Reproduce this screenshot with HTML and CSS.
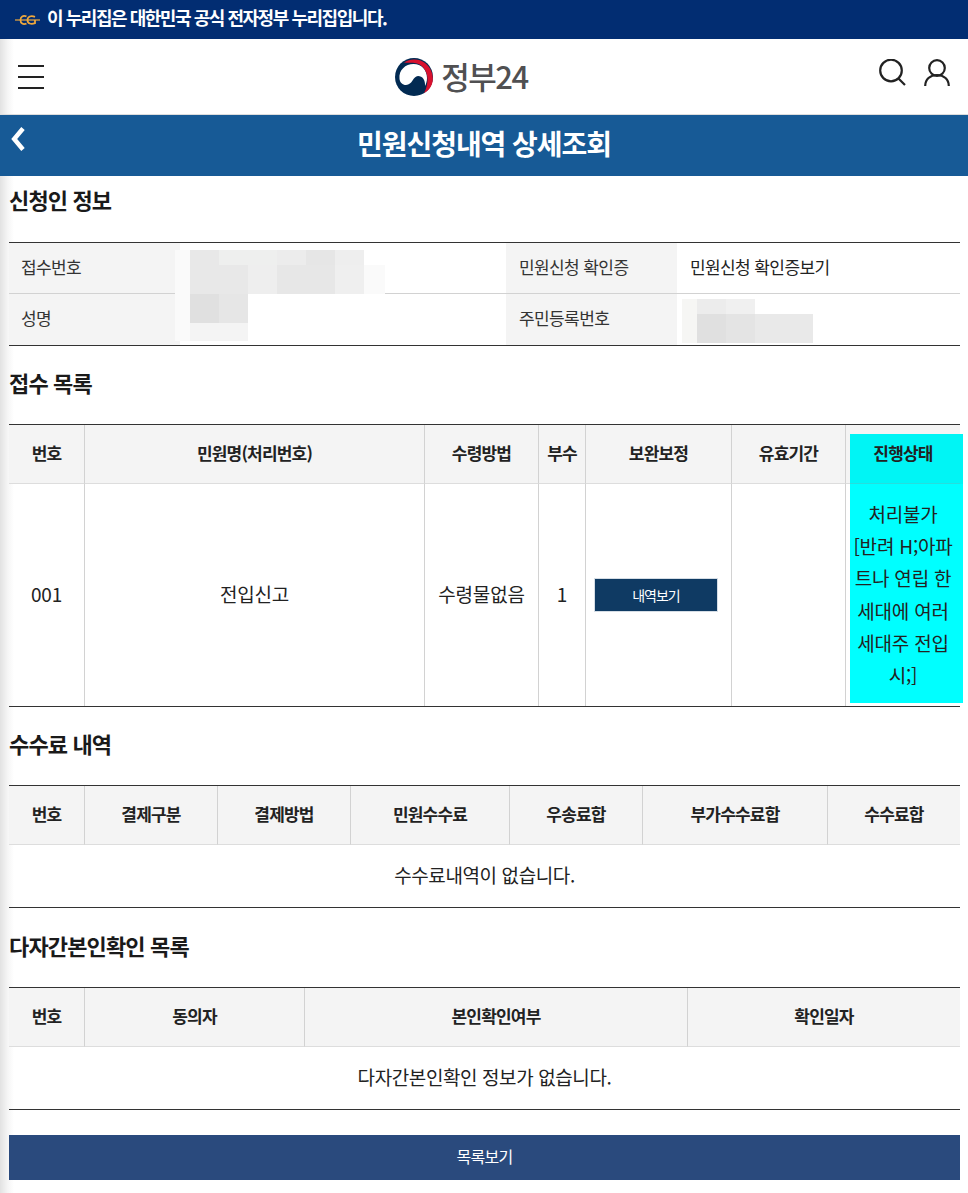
FILE: index.html
```html
<!DOCTYPE html>
<html lang="ko">
<head>
<meta charset="utf-8">
<title>민원신청내역 상세조회</title>
<link rel="stylesheet" href="styles.css">
</head>
<body>
<div class="gov-bar">
  <svg class="nuri" viewBox="0 0 26 10" width="26" height="10" aria-hidden="true">
    <path d="M0 5H25" fill="none" stroke="#f0a83c" stroke-width="1.200"/>
    <path d="M11.500 1.400C8 .2 5.500 1.500 5.500 5S8 9.800 11.500 8.600" fill="none" stroke="#f0a83c" stroke-width="1.800"/>
    <path d="M20 1.800C16 .2 12.500 1.500 12.500 5s3.500 4.800 7.500 3.200V5" fill="none" stroke="#f0a83c" stroke-width="1.800"/>
  </svg>
  <span>이 누리집은 대한민국 공식 전자정부 누리집입니다.</span>
</div>
<header class="site-head">
  <svg class="menu" viewBox="0 0 26 24" width="26" height="24" aria-hidden="true">
    <path d="M0 1H26M0 12H26M0 23H26" stroke="#222" stroke-width="2" fill="none"/>
  </svg>
  <div class="logo">
    <svg viewBox="0 0 38 38" width="38" height="38" aria-hidden="true">
      <circle cx="19" cy="19" r="19" fill="#022a52"/>
      <path d="M4.500 21C3.500 12 10.500 6 18.500 6 26.500 6 32 12 32 20c0 3.500-1 6-2 8 .5-6-2.500-10-7-10-5 0-5.500 9-12 9-3.500 0-6-2.500-6.500-6Z" fill="#fff"/>
      <path d="M9 4.500C15 .5 24 .5 30 5c6 4.500 9.500 13 7 21-1.500 4-4.500 7.500-8 9 2.500-4 3.500-9.500 3.500-14C32.500 12 26 5 18 4.800c-3 0-6 .2-9-.3Z" fill="#d8112e"/>
    </svg>
    <span class="logo-text">정부24</span>
  </div>
  <div class="head-tools">
    <svg viewBox="0 0 27 27" width="27" height="27" aria-hidden="true">
      <circle cx="12" cy="11.500" r="10.800" fill="none" stroke="#222" stroke-width="2.200"/>
      <path d="M19.500 19.500L26 26" stroke="#222" stroke-width="2.200" fill="none"/>
    </svg>
    <svg viewBox="0 0 26 27" width="26" height="27" aria-hidden="true">
      <circle cx="13" cy="9" r="7.800" fill="none" stroke="#222" stroke-width="2.200"/>
      <path d="M1.200 27C1.200 20.500 6 16 13 16S24.800 20.500 24.800 27" fill="none" stroke="#222" stroke-width="2.200"/>
    </svg>
  </div>
</header>
<div class="title-bar">
  <svg class="back" viewBox="0 0 14 24" width="14" height="24" aria-hidden="true">
    <path d="M12 1.500L3.200 12 12 22.500" fill="none" stroke="#fff" stroke-width="4.500"/>
  </svg>
  <h1>민원신청내역 상세조회</h1>
</div>
<main class="content">
  <section class="block block-first">
    <h2>신청인 정보</h2>
    <table class="info">
      <colgroup><col class="i1"><col class="i2"><col class="i3"><col class="i4"></colgroup>
      <tr>
        <th>접수번호</th>
        <td class="masked">
          <svg class="mosaic m-a" viewBox="175 250 210 91" width="210" height="91" aria-hidden="true">
            <rect x="175" y="250" width="15" height="91" fill="#fafafa"/>
            <rect x="364" y="265" width="21" height="29" fill="#fafafa"/>
            <rect x="190" y="250" width="29" height="15" fill="#e8e8e8"/>
            <rect x="219" y="250" width="58" height="15" fill="#eeefee"/>
            <rect x="277" y="250" width="29" height="15" fill="#ececec"/>
            <rect x="306" y="250" width="29" height="15" fill="#e6e6e6"/>
            <rect x="335" y="250" width="29" height="15" fill="#eeeeee"/>
            <rect x="190" y="265" width="58" height="29" fill="#e8e8e8"/>
            <rect x="248" y="265" width="29" height="29" fill="#eeeeee"/>
            <rect x="277" y="265" width="58" height="29" fill="#e7e7e7"/>
            <rect x="335" y="265" width="29" height="29" fill="#efefef"/>
            <rect x="190" y="294" width="29" height="29" fill="#e0e0e0"/>
            <rect x="219" y="294" width="29" height="29" fill="#e6e6e6"/>
            <rect x="190" y="323" width="58" height="18" fill="#f4f4f4"/>
          </svg>
        </td>
        <th>민원신청 확인증</th>
        <td>민원신청 확인증보기</td>
      </tr>
      <tr>
        <th>성명</th>
        <td></td>
        <th>주민등록번호</th>
        <td class="masked">
          <svg class="mosaic m-b" viewBox="682 299 131 44" width="131" height="44" aria-hidden="true">
            <rect x="682" y="299" width="15" height="44" fill="#f6f6f4"/>
            <rect x="697" y="299" width="29" height="15" fill="#ececec"/>
            <rect x="726" y="299" width="29" height="15" fill="#f0f0f0"/>
            <rect x="697" y="314" width="29" height="29" fill="#e0e0e0"/>
            <rect x="726" y="314" width="29" height="29" fill="#e4e4e4"/>
            <rect x="755" y="314" width="58" height="29" fill="#e9e9e9"/>
          </svg>
        </td>
      </tr>
    </table>
  </section>
  <section class="block">
    <h2>접수 목록</h2>
    <table class="grid">
      <colgroup><col class="a1"><col class="a2"><col class="a3"><col class="a4"><col class="a5"><col class="a6"><col class="a7"></colgroup>
      <tr>
        <th>번호</th><th>민원명(처리번호)</th><th>수령방법</th><th>부수</th><th>보완보정</th><th>유효기간</th>
        <th class="flag"><span class="flag-head">진행상태</span></th>
      </tr>
      <tr class="tall">
        <td>001</td><td>전입신고</td><td>수령물없음</td><td>1</td>
        <td><button class="view-btn" type="button">내역보기</button></td>
        <td></td>
        <td class="flag"><span class="flag-body">처리불가<br>[반려 H;아파<br>트나 연립 한<br>세대에 여러<br>세대주 전입<br>시;]</span></td>
      </tr>
    </table>
  </section>
  <section class="block">
    <h2>수수료 내역</h2>
    <table class="grid">
      <colgroup><col class="b1"><col class="b2"><col class="b3"><col class="b4"><col class="b5"><col class="b6"><col class="b7"></colgroup>
      <tr><th>번호</th><th>결제구분</th><th>결제방법</th><th>민원수수료</th><th>우송료합</th><th>부가수수료합</th><th>수수료합</th></tr>
      <tr class="empty"><td colspan="7">수수료내역이 없습니다.</td></tr>
    </table>
  </section>
  <section class="block block-last">
    <h2>다자간본인확인 목록</h2>
    <table class="grid">
      <colgroup><col class="c1"><col class="c2"><col class="c3"><col class="c4"></colgroup>
      <tr><th>번호</th><th>동의자</th><th>본인확인여부</th><th>확인일자</th></tr>
      <tr class="empty"><td colspan="4">다자간본인확인 정보가 없습니다.</td></tr>
    </table>
  </section>
  <button class="list-btn" type="button">목록보기</button>
</main>
</body>
</html>
```
FILE: styles.css
```css
* { box-sizing: border-box; }
html, body { margin: 0; padding: 0; }
body {
  width: 968px;
  height: 1193px;
  overflow: hidden;
  font-family: "Noto Sans CJK KR", "Noto Sans", sans-serif;
  color: #222;
  background: linear-gradient(90deg, #e2e2e2 0, #f6f6f6 8px, #fff 14px);
}
.gov-bar {
  height: 39px;
  background: #022d72;
  color: #fff;
  display: flex;
  align-items: center;
  gap: 6px;
  padding-left: 15px;
  font-size: 18px;
  font-weight: 700;
  letter-spacing: -1.46px;
}
.nuri { flex: none; }
.gov-bar span { margin-top: -5px; }
.site-head {
  height: 76px;
  border-bottom: 1px solid #ddd;
  display: flex;
  align-items: center;
  justify-content: space-between;
  padding: 0 18px;
  position: relative;
}
.logo {
  display: flex;
  align-items: center;
  gap: 8px;
}
.logo-text {
  font-size: 31px;
  font-weight: 500;
  color: #505052;
  letter-spacing: -1.5px;
  line-height: 36px;
  margin-bottom: 2px;
}
.head-tools { display: flex; gap: 18px; margin-top: -8px; }
.title-bar {
  height: 61px;
  background: #175a96;
  display: flex;
  align-items: center;
  justify-content: center;
  position: relative;
}
.title-bar h1 {
  margin: 0 0 5px;
  color: #fff;
  font-size: 28px;
  font-weight: 700;
  letter-spacing: -1.05px;
  line-height: 56px;
}
.back { position: absolute; left: 11px; top: 12px; }
.content { padding: 0 8px 0 9px; }
.block { margin-top: 12px; }
.block-first { margin-top: 0; }
.block-last { margin-top: 13px; }
h2 {
  margin: 0 0 16px;
  height: 50px;
  line-height: 48px;
  font-size: 22px;
  font-weight: 700;
  letter-spacing: -0.85px;
  color: #1a1a1a;
}
.block-first h2 { line-height: 46px; }
table {
  width: 951px;
  table-layout: fixed;
  border-collapse: separate;
  border-spacing: 0;
  border-top: 1px solid #333;
  border-bottom: 1px solid #333;
}
.info th {
  background: #f4f4f4;
  font-weight: 400;
  text-align: left;
  padding: 0 0 4px 13px;
  font-size: 17px;
  letter-spacing: -0.6px;
  color: #333;
}
.info tr th:first-child { padding-left: 12px; }
.info td {
  padding: 0 0 4px 13px;
  font-size: 17px;
  letter-spacing: -0.6px;
  color: #222;
}
.info tr { height: 51px; }
.info tr:first-child th, .info tr:first-child td { border-bottom: 1px solid #d2d2d2; }
.masked { position: relative; }
.mosaic { position: absolute; display: block; }
.m-a { left: -5px; top: 7px; }
.m-b { left: 5px; top: 5px; }
.i1 { width: 171px; } .i2 { width: 326px; } .i3 { width: 171px; } .i4 { width: 283px; }
.grid th {
  height: 59px;
  background: #f4f4f4;
  font-size: 17px;
  font-weight: 700;
  letter-spacing: -0.8px;
  color: #222;
  border-bottom: 1px solid #ddd;
  border-left: 1px solid #d2d2d2;
  text-align: center;
  padding: 0 0 4px;
}
.grid th:first-child, .grid td:first-child { border-left: 0; }
.grid td {
  font-size: 19px;
  letter-spacing: -0.2px;
  color: #222;
  border-left: 1px solid #d2d2d2;
  text-align: center;
  padding: 0 0 4px;
}
.tall { height: 222px; }
.empty { height: 62px; }
.empty td { letter-spacing: -0.4px; }
.grid .flag { position: relative; }
.flag-head, .flag-body {
  position: absolute;
  left: 4px;
  right: -3px;
  display: flex;
  align-items: center;
  justify-content: center;
}
.flag-head {
  top: 9px;
  bottom: -1px;
  background: linear-gradient(90deg, #26dede 110px, #00f5f5 110px) bottom / 100% 1px no-repeat, #00f5f5;
  padding: 0 7px 13px 0;
}
.flag-body {
  top: 0;
  bottom: 3px;
  background: #00ffff;
  line-height: 32.200px;
  padding: 2px 7px 0 0;
}
.a1 { width: 75px; } .a2 { width: 340px; } .a3 { width: 114px; } .a4 { width: 47px; }
.a5 { width: 146px; } .a6 { width: 114px; } .a7 { width: 115px; }
.b1 { width: 75px; } .b2 { width: 133px; } .b3 { width: 133px; } .b4 { width: 159px; }
.b5 { width: 133px; } .b6 { width: 185px; } .b7 { width: 133px; }
.c1 { width: 75px; } .c2 { width: 220px; } .c3 { width: 383px; } .c4 { width: 273px; }
.view-btn {
  display: block;
  width: 124px;
  height: 34px;
  margin: 4px 0 0 8px;
  background: #0f3a63;
  border: 1px solid #d5dde5;
  color: #fff;
  font: inherit;
  font-size: 14px;
  letter-spacing: -1px;
}
.list-btn {
  display: block;
  width: 951px;
  height: 45px;
  margin-top: 25px;
  border: 0;
  background: #2a4a7d;
  color: #fff;
  font: inherit;
  font-size: 16px;
  letter-spacing: -0.7px;
  padding-bottom: 4px;
}
```
